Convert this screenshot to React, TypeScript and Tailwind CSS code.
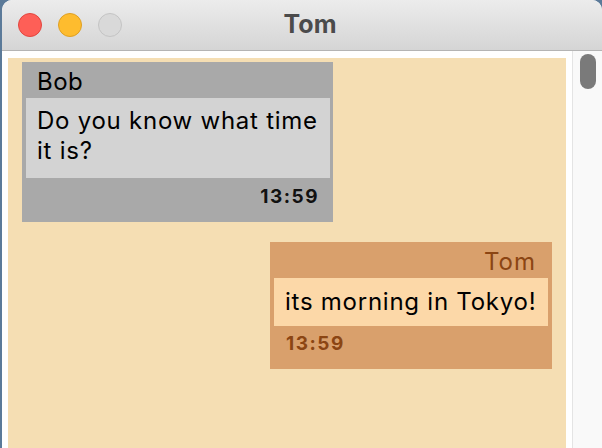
import React from "react";

type Message = {
  id: number;
  author: string;
  text: string;
  time: string;
  mine: boolean;
};

const messages: Message[] = [
  { id: 1, author: "Bob", text: "Do you know what time it is?", time: "13:59", mine: false },
  { id: 2, author: "Tom", text: "its morning in Tokyo!", time: "13:59", mine: true },
];

function Bubble({ message }: { message: Message }) {
  if (message.mine) {
    return (
      <div className="flex w-[282px] flex-col self-end bg-[#d9a06c]">
        <div className="flex h-[36px] items-center justify-end pt-[3px] pr-[16px] text-[24px] tracking-[1px] text-[#8b4513]">
          {message.author}
        </div>
        <div className="mx-[4px] bg-[#fcd8a8] px-[11px] py-[9px] text-[24px] leading-[30px] tracking-[0.75px] text-black">
          {message.text}
        </div>
        <div className="flex h-[43px] items-center pb-[6px] pl-[16px] text-[19px] font-bold tracking-[1.5px] text-[#8b4513]">
          {message.time}
        </div>
      </div>
    );
  }

  return (
    <div className="flex w-[311px] flex-col self-start bg-[#a9a9a9]">
      <div className="flex h-[36px] items-center pt-[3px] pl-[15px] text-[24px] tracking-[0.5px] text-black">
        {message.author}
      </div>
      <div className="ml-[4px] mr-[3px] bg-[#d3d3d3] px-[11px] pt-[8px] pb-[12px] text-[24px] leading-[30px] tracking-[0.75px] text-black">
        {message.text}
      </div>
      <div className="flex h-[44px] items-center justify-end pb-[6px] pr-[14px] text-[19px] font-bold tracking-[1.5px] text-[#111]">
        {message.time}
      </div>
    </div>
  );
}

export default function App() {
  return (
    <div className="flex h-[448px] w-[602px] overflow-hidden bg-[#5b7a99] font-['Inter',_'Liberation_Sans',_sans-serif]">
      <div className="ml-[2px] flex flex-1 flex-col overflow-hidden rounded-t-[10px] bg-white">
        {/* title bar */}
        <div className="flex h-[51px] shrink-0 items-center border-b border-[#b4b4b4] bg-gradient-to-b from-[#ececec] to-[#d5d5d5]">
          <div className="flex flex-1 items-center gap-[16px] pl-[16px]">
            <span className="h-[24px] w-[24px] rounded-full border border-[#e2463f] bg-[#fe5f57]" />
            <span className="h-[24px] w-[24px] rounded-full border border-[#dfa023] bg-[#febc2e]" />
            <span className="h-[24px] w-[24px] rounded-full border border-[#c4c4c4] bg-[#d9d9d9]" />
          </div>
          <div className="text-[25px] font-bold text-[#4b4b4b]">Tom</div>
          <div className="flex-1" />
        </div>

        <div className="flex flex-1 overflow-hidden">
          <div className="flex-1 px-[6px] pt-[7px]">
            <div className="flex h-full flex-col gap-[20px] bg-[#f5deb3] px-[14px] pt-[4px]">
              {messages.map((m) => (
                <Bubble key={m.id} message={m} />
              ))}
            </div>
          </div>
          {/* scrollbar */}
          <div className="w-[30px] shrink-0 border-l border-[#e4e4e4] bg-[#f9f9f9] pt-[3px] pl-[7px]">
            <div className="h-[35px] w-[16px] rounded-full bg-[#7a7a7a]" />
          </div>
        </div>
      </div>
    </div>
  );
}
